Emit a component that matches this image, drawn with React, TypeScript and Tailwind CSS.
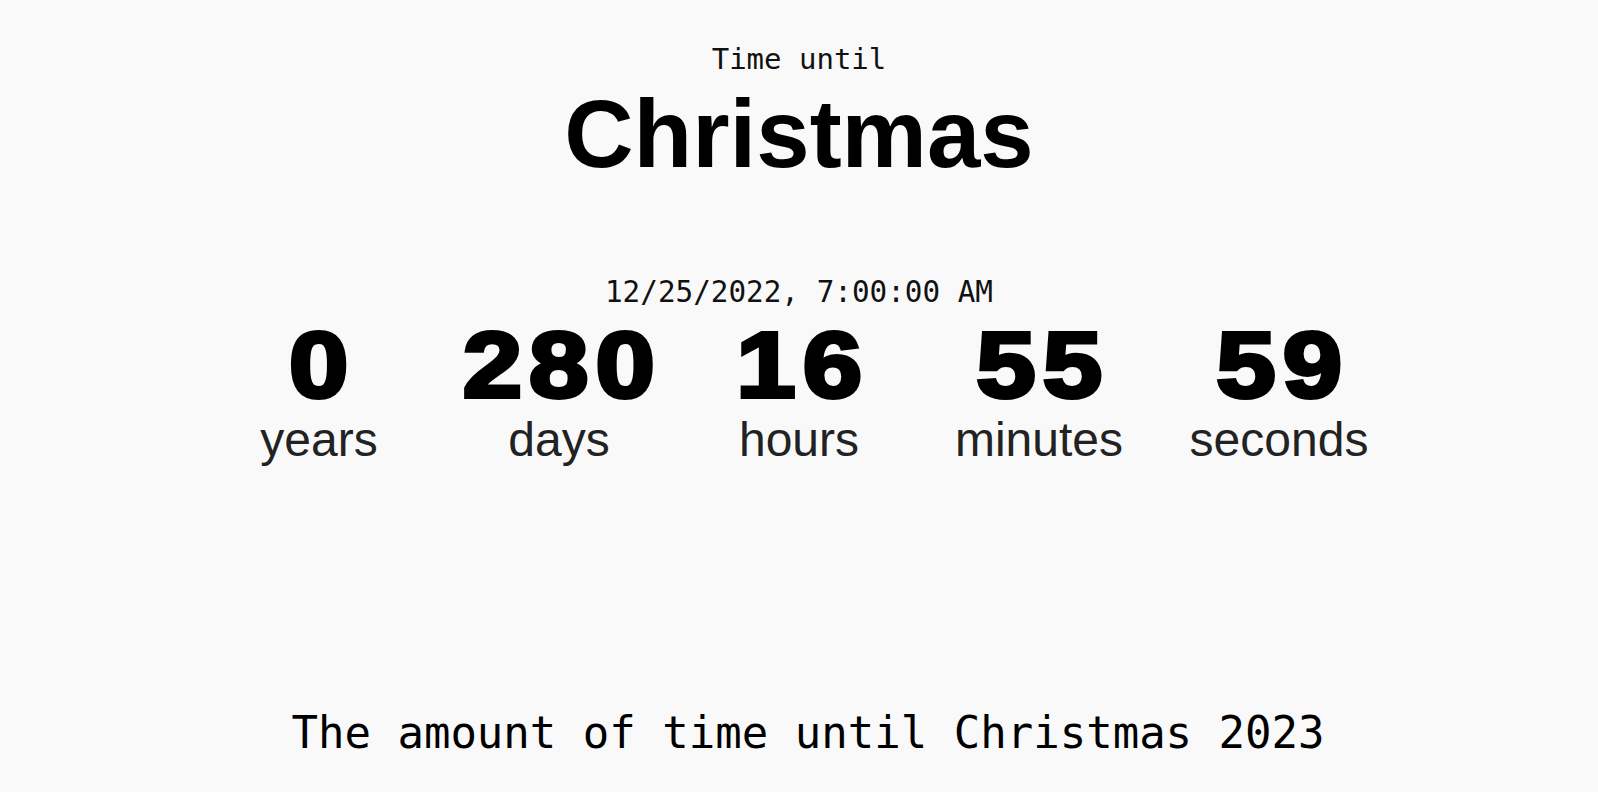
const units = [
  { value: "0", label: "years" },
  { value: "280", label: "days" },
  { value: "16", label: "hours" },
  { value: "55", label: "minutes" },
  { value: "59", label: "seconds" },
];

const mono = "font-['DejaVu_Sans_Mono',monospace]";
const sans = "font-['Liberation_Sans',Arial,sans-serif]";

function Unit({ value, label }: { value: string; label: string }) {
  return (
    <div className="flex w-[240px] flex-col items-center">
      <div
        className={`${sans} inline-block origin-center scale-x-[1.16] pl-[6px] text-[92px] font-bold leading-none tracking-[6px] text-black [-webkit-text-stroke:4px_black]`}
      >
        {value}
      </div>
      <div className={`${sans} mt-[5px] text-[48px] leading-none text-[#222]`}>{label}</div>
    </div>
  );
}

export default function App() {
  return (
    <div className="flex min-h-screen flex-col items-center bg-[#f9f9f9] pt-[45px] pb-[37px]">
      <div className={`${mono} text-[29px] leading-none text-[#111]`}>Time until</div>
      <h1 className={`${sans} mt-[12px] text-[96px] font-bold leading-none text-black`}>Christmas</h1>

      <div className={`${mono} mt-[96px] text-[29.3px] leading-none text-[#111]`}>
        12/25/2022, 7:00:00 AM
      </div>
      <div className="mt-[12px] flex">
        {units.map((u) => (
          <Unit key={u.label} value={u.value} label={u.label} />
        ))}
      </div>

      <p className={`${mono} mt-auto ml-[18px] text-[44px] leading-none text-black`}>
        The amount of time until Christmas 2023
      </p>
    </div>
  );
}
